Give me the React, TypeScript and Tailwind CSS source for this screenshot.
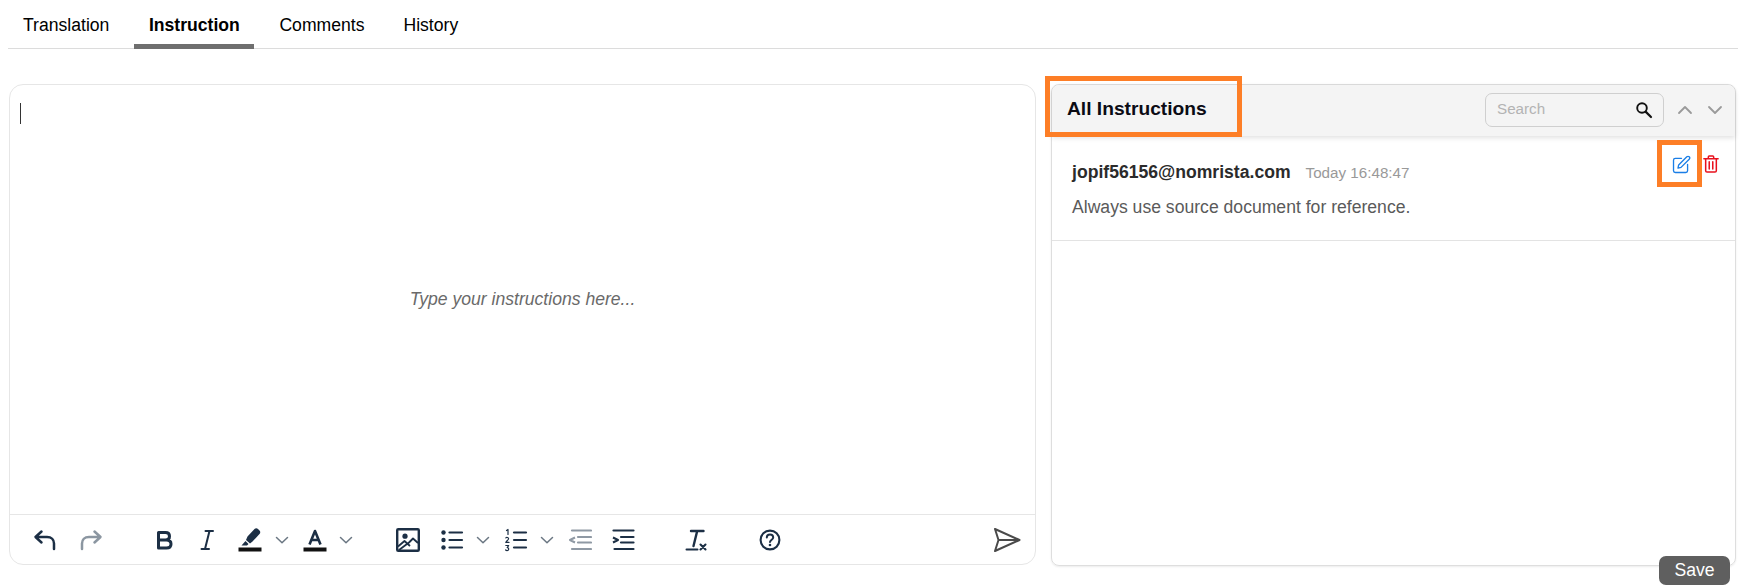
import React from "react";

const navy = "#1c2f45";

function Chevron({ color = "#6b7783", className = "" }: { color?: string; className?: string }) {
  return (
    <svg width="16" height="16" viewBox="0 0 16 16" fill="none" className={className}>
      <path d="M2.5 5.5 L8 10.8 L13.5 5.5" stroke={color} strokeWidth="1.5" strokeLinecap="round" strokeLinejoin="round" />
    </svg>
  );
}

function Ico({ children, className = "" }: { children: React.ReactNode; className?: string }) {
  return (
    <svg width="24" height="24" viewBox="0 0 24 24" fill="none" className={className}>
      {children}
    </svg>
  );
}

function Lines({ color, x = 10 }: { color: string; x?: number }) {
  return (
    <g stroke={color} strokeWidth="2.2" strokeLinecap="round">
      <path d={`M${x} 4.5H22`} />
      <path d={`M${x} 12H22`} />
      <path d={`M${x} 19.5H22`} />
    </g>
  );
}

export default function App() {
  return (
    <div className="relative w-[1748px] h-[588px] bg-white overflow-hidden font-['Liberation_Sans',Arial,sans-serif] text-black">
      <div className="ml-2 mr-[10px] flex gap-[10px] h-[49px] border-b border-[#dcdcdc] text-[17.6px] leading-[22px]">
        <div className="px-[15px] pt-[14px]">Translation</div>
        <div className="pt-[14px] font-bold w-[120px] h-[49px] border-b-[5px] border-[#6f6f6f] text-center">Instruction</div>
        <div className="px-[15px] pt-[14px]">Comments</div>
        <div className="px-[15px] pt-[14px] -ml-[1px]">History</div>
      </div>

      <div className="flex mt-[35px] ml-[9px] gap-[15px] h-[481px]">
        {/* Editor */}
        <div className="w-[1027px] h-[481px] border border-[#e6e6e6] rounded-[14px] flex flex-col">
          <div className="flex-1 relative pl-[10px] pt-[18px]">
            <div className="w-px h-[21px] bg-[#333]" />
            <div className="absolute inset-0 flex items-center justify-center pb-[1px] italic text-[17.6px] text-[#6a6a6a]">
              Type your instructions here...
            </div>
          </div>
          <div className="h-[50px] border-t border-[#e6e6e6] flex items-center pl-[23px] pr-[14px]">
            {/* undo */}
            <Ico>
              <path d="M8.5 3.5 L2.5 9 L8.5 14.5 M3 9 H14 C18.5 9 21 12 21 15.5 V21" stroke={navy} strokeWidth="2.5" strokeLinecap="round" strokeLinejoin="round" />
            </Ico>
            {/* redo */}
            <Ico className="ml-[22px]">
              <path d="M15.5 3.5 L21.5 9 L15.5 14.5 M21 9 H10 C5.5 9 3 12 3 15.5 V21" stroke="#8b96a1" strokeWidth="2.5" strokeLinecap="round" strokeLinejoin="round" />
            </Ico>
            {/* bold */}
            <Ico className="ml-[49px]">
              <path d="M6.5 4.5 H13.5 C16 4.5 17.5 6 17.5 8.2 C17.5 10.4 16 12 13.5 12 H6.5 Z M6.5 12 H14.5 C17.2 12 19 13.6 19 16 C19 18.4 17.2 20 14.5 20 H6.5 Z" stroke={navy} strokeWidth="3" strokeLinejoin="round" />
            </Ico>
            {/* italic */}
            <Ico className="ml-[19px]">
              <path d="M10.5 3 H18 M6.5 21 H14 M14.5 3 L10 21" stroke={navy} strokeWidth="2" strokeLinecap="round" />
            </Ico>
            {/* highlight */}
            <Ico className="ml-[19px]">
              <path d="M9.5 8.5 L16.5 1 C17.5 0 19 0 20 1 L21.5 2.5 C22.5 3.5 22.5 5 21.5 6 L14.5 13.5 L12 15.5 L8 12 Z M7.5 13 L10.5 16 L9 17.5 L3.5 17.5 Z" fill={navy} />
              <rect x="0.5" y="19.5" width="23" height="4" fill="#111" />
            </Ico>
            <Chevron className="ml-[12px]" />
            {/* text colour */}
            <Ico className="ml-[13px]">
              <path d="M6.5 16.5 L12 3 L17.5 16.5 M8.5 12 H15.5" stroke={navy} strokeWidth="2.6" strokeLinejoin="round" />
              <rect x="0.5" y="19.5" width="23" height="4" fill="#111" />
            </Ico>
            <Chevron className="ml-[11px]" />
            {/* image */}
            <Ico className="ml-[42px]">
              <rect x="1.2" y="1.2" width="21.6" height="21.6" rx="1" stroke={navy} strokeWidth="2.4" />
              <circle cx="9" cy="8.2" r="2.6" fill={navy} />
              <path d="M2 18.5 L8.5 13 L14 18 M3 22 L13 14.5 L17 10.5 L22 15" stroke={navy} strokeWidth="1.8" strokeLinejoin="round" />
            </Ico>
            {/* bullets */}
            <Ico className="ml-[20px]">
              <circle cx="3.5" cy="4.5" r="2.2" fill={navy} />
              <circle cx="3.5" cy="12" r="2.2" fill={navy} />
              <circle cx="3.5" cy="19.5" r="2.2" fill={navy} />
              <Lines color={navy} x={9.5} />
            </Ico>
            <Chevron className="ml-[11px]" />
            {/* numbers */}
            <Ico className="ml-[13px]">
              <path d="M2.5 2.5 L4 1.5 V6.5 M1.8 9.8 C2.6 9 4.8 9.3 4.5 11 C4.3 12 2.3 13 1.8 14.4 H5 M1.8 17.5 H4.7 L3.2 19.6 C5 19.4 5.4 22.6 3 22.6 C2.5 22.6 2 22.4 1.6 22" stroke={navy} strokeWidth="1.2" strokeLinecap="round" strokeLinejoin="round" />
              <Lines color={navy} x={10} />
            </Ico>
            <Chevron className="ml-[11px]" />
            {/* outdent */}
            <Ico className="ml-[13px]">
              <g stroke="#8f99a4" strokeWidth="2.2" strokeLinecap="round">
                <path d="M4 2.5H23" />
                <path d="M10 9H23" />
                <path d="M10 14.5H23" />
                <path d="M4 21H23" />
              </g>
              <path d="M7 9.5 L2 12 L7 14.5" stroke="#8f99a4" strokeWidth="2" strokeLinejoin="round" />
            </Ico>
            {/* indent */}
            <Ico className="ml-[19px]">
              <g stroke={navy} strokeWidth="2.2" strokeLinecap="round">
                <path d="M2.5 2.5H22.5" />
                <path d="M10 9H22.5" />
                <path d="M10 14.5H22.5" />
                <path d="M3.5 21H22.5" />
              </g>
              <path d="M2 9.5 L7 12 L2 14.5" stroke={navy} strokeWidth="2" strokeLinejoin="round" />
            </Ico>
            {/* clear format */}
            <Ico className="ml-[49px]">
              <path d="M7 3 H19.5 M13.2 3 L9.5 18" stroke={navy} strokeWidth="2.4" strokeLinecap="round" />
              <path d="M2.5 21.5 H13.5" stroke={navy} strokeWidth="2" strokeLinecap="round" />
              <path d="M16.5 16.5 L21.5 21.5 M21.5 16.5 L16.5 21.5" stroke={navy} strokeWidth="2.1" strokeLinecap="round" />
            </Ico>
            {/* help */}
            <Ico className="ml-[50px]">
              <circle cx="12" cy="12" r="9.4" stroke={navy} strokeWidth="2.1" />
              <path d="M8.8 9.6 C8.8 7.6 10.3 6.6 12 6.6 C13.8 6.6 15.2 7.7 15.2 9.4 C15.2 11.5 12.2 11.8 12 14" stroke={navy} strokeWidth="2" strokeLinecap="round" />
              <circle cx="12" cy="17" r="1.3" fill={navy} />
            </Ico>
            {/* send */}
            <svg width="28" height="26" viewBox="0 0 28 26" fill="none" className="ml-auto">
              <path d="M2 2 L26.5 13 L2 24 L5.5 13 Z M5.5 13 H26" stroke="#4a4a4a" strokeWidth="2" strokeLinejoin="round" />
            </svg>
          </div>
        </div>

        {/* Instructions list */}
        <div className="w-[685px] h-[482px] border border-[#dedede] rounded-[8px] flex flex-col shadow-[0_1px_2px_rgba(0,0,0,0.08)]">
          <div className="h-[51px] bg-[#f4f4f4] rounded-t-[8px] flex items-center pl-[15px] pr-[12px] pb-[2px] shadow-[0_2px_5px_rgba(0,0,0,0.12)]">
            <div className="font-bold text-[19.2px] text-[#0b0b14]">All Instructions</div>
            <div className="ml-auto w-[179px] h-[34px] border border-[#cfcfcf] rounded-[7px] flex items-center pl-[11px] pr-[10px] text-[15.2px] text-[#b3b3b3]">
              <span>Search</span>
              <svg width="18" height="18" viewBox="0 0 18 18" fill="none" className="ml-auto">
                <circle cx="7" cy="7" r="4.8" stroke="#111" strokeWidth="1.9" />
                <path d="M10.6 10.6 L16 16" stroke="#111" strokeWidth="2.2" strokeLinecap="round" />
              </svg>
            </div>
            <svg width="16" height="16" viewBox="0 0 16 16" fill="none" className="ml-[13px]">
              <path d="M2 11 L8 5 L14 11" stroke="#9a9a9a" strokeWidth="1.8" strokeLinecap="round" strokeLinejoin="round" />
            </svg>
            <svg width="16" height="16" viewBox="0 0 16 16" fill="none" className="ml-[14px]">
              <path d="M2 5 L8 11 L14 5" stroke="#9a9a9a" strokeWidth="1.8" strokeLinecap="round" strokeLinejoin="round" />
            </svg>
          </div>
          <div className="h-[105px] border-b border-[#e3e3e3] relative pl-5 pr-[16px]">
            <div className="flex items-baseline pt-[24px] leading-[24px]">
              <span className="font-bold text-[17.6px] text-[#2b2b2b]">jopif56156@nomrista.com</span>
              <span className="ml-[15px] text-[15.2px] text-[#999999]">Today 16:48:47</span>
              <span className="ml-auto flex gap-[12px] items-start self-start -mt-[5px]">
                <svg width="19" height="19" viewBox="0 0 20 20" fill="none">
                  <path d="M10 3.5 H3.5 C2.4 3.5 1.6 4.3 1.6 5.4 V16.5 C1.6 17.6 2.4 18.4 3.5 18.4 H14.5 C15.6 18.4 16.4 17.6 16.4 16.5 V10" stroke="#1a7ee6" strokeWidth="1.4" strokeLinecap="round" />
                  <path d="M7 10.5 L15.6 1.9 C16.3 1.2 17.4 1.2 18.1 1.9 C18.8 2.6 18.8 3.7 18.1 4.4 L9.5 13 L6.3 13.8 Z" stroke="#1a7ee6" strokeWidth="1.4" strokeLinejoin="round" />
                </svg>
                <svg width="16" height="18" viewBox="0 0 18 20" fill="none">
                  <path d="M1 4 H17 M6 4 V2 C6 1.4 6.4 1 7 1 H11 C11.6 1 12 1.4 12 2 V4 M3 4 V17.5 C3 18.3 3.7 19 4.5 19 H13.5 C14.3 19 15 18.3 15 17.5 V4 M7 7.5 V15.5 M11 7.5 V15.5" stroke="#e8101c" strokeWidth="1.7" strokeLinecap="round" strokeLinejoin="round" />
                </svg>
              </span>
            </div>
            <div className="mt-[10px] text-[17.6px] leading-[24px] text-[#5a5a5a]">Always use source document for reference.</div>
          </div>
        </div>
      </div>

      {/* Annotation boxes and floating button, lying over the content */}
      <div className="absolute left-[1045px] top-[76px] w-[197px] h-[61px] border-[5px] border-[#fd7e26]" />
      <div className="absolute left-[1657px] top-[140px] w-[45px] h-[47px] border-[5px] border-[#fd7e26]" />
      <button className="absolute left-[1659px] top-[556px] w-[71px] h-[29px] rounded-[7px] bg-[#5f5f5f] text-white text-[17.6px] flex items-center justify-center">
        Save
      </button>
    </div>
  );
}
